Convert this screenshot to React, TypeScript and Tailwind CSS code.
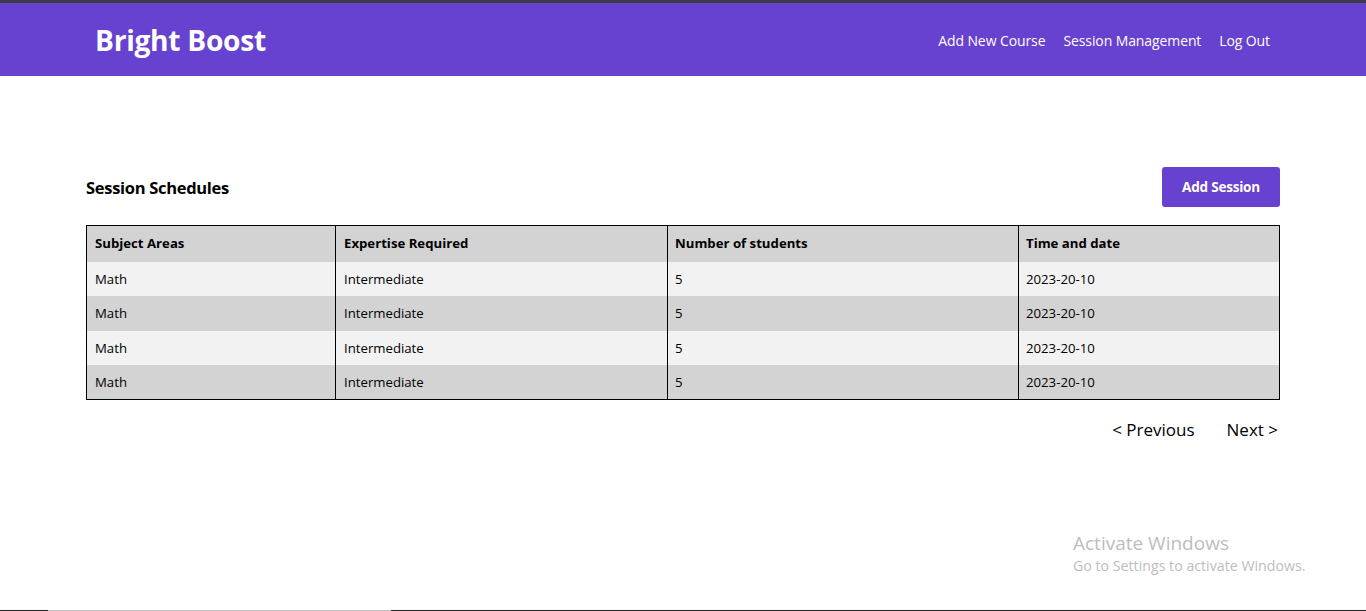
import React from "react";

const rows = [0, 1, 2, 3];

export default function App() {
  return (
    <div
      className="relative w-[1366px] h-[611px] bg-white overflow-hidden"
      style={{ fontFamily: '"Open Sans", "Noto Sans", sans-serif' }}
    >
      <div className="h-[3px] bg-[#3d3a48]" />
      <header className="h-[73px] bg-[#6741cf] flex items-center justify-between pl-[95px] pr-[96px]">
        <div className="text-white font-bold text-[28.2px] tracking-[-0.3px] mt-[1px] leading-none">Bright Boost</div>
        <nav className="flex gap-[18px] text-white text-[14px] tracking-[-0.1px] mt-[2px]">
          <span>Add New Course</span>
          <span>Session Management</span>
          <span>Log Out</span>
        </nav>
      </header>

      <main className="px-[86px] pt-[91px]">
        <div className="flex items-center justify-between">
          <h2 className="text-[16.5px] font-bold text-black tracking-[-0.3px] mt-[2px]">Session Schedules</h2>
          <button className="w-[118px] h-[40px] bg-[#6741cf] rounded-[3px] text-white text-[13.5px] font-bold tracking-[-0.2px]">
            Add Session
          </button>
        </div>

        <table className="mt-[18px] w-full border border-black border-collapse text-[13.2px] text-black">
          <thead>
            <tr className="bg-[#d3d3d3] h-[36px]">
              <th className="text-left font-bold px-[8px] pt-[1px] w-[249px] border-r border-black">Subject Areas</th>
              <th className="text-left font-bold px-[8px] pt-[1px] w-[332px] border-r border-black">Expertise Required</th>
              <th className="text-left font-bold px-[7px] pt-[1px] w-[351px] border-r border-black">Number of students</th>
              <th className="text-left font-bold px-[7px] pt-[1px]">Time and date</th>
            </tr>
          </thead>
          <tbody>
            {rows.map((i) => (
              <tr key={i} className={i % 2 === 0 ? "bg-[#f2f2f2] h-[34.5px]" : "bg-[#d3d3d3] h-[34.5px]"}>
                <td className="px-[8px] pt-[2px] border-r border-black">Math</td>
                <td className="px-[8px] pt-[2px] border-r border-black">Intermediate</td>
                <td className="px-[7px] pt-[2px] border-r border-black">5</td>
                <td className="px-[7px] pt-[2px]">2023-20-10</td>
              </tr>
            ))}
          </tbody>
        </table>

        <div className="flex justify-end gap-[32px] mt-[17px] text-[17px] text-black pr-[2px]">
          <span>&lt; Previous</span>
          <span>Next &gt;</span>
        </div>
      </main>

      <div className="absolute left-[1073px] top-[532px] text-[#bdbdbd] leading-tight">
        <div className="text-[19px]">Activate Windows</div>
        <div className="text-[14.2px] mt-[1px]">Go to Settings to activate Windows.</div>
      </div>

      <div className="absolute left-0 bottom-0 w-full h-[1px] bg-[#1e1e1e]" />
      <div className="absolute left-[48px] bottom-0 w-[343px] h-[1px] bg-[#c4c4c4]" />
    </div>
  );
}
